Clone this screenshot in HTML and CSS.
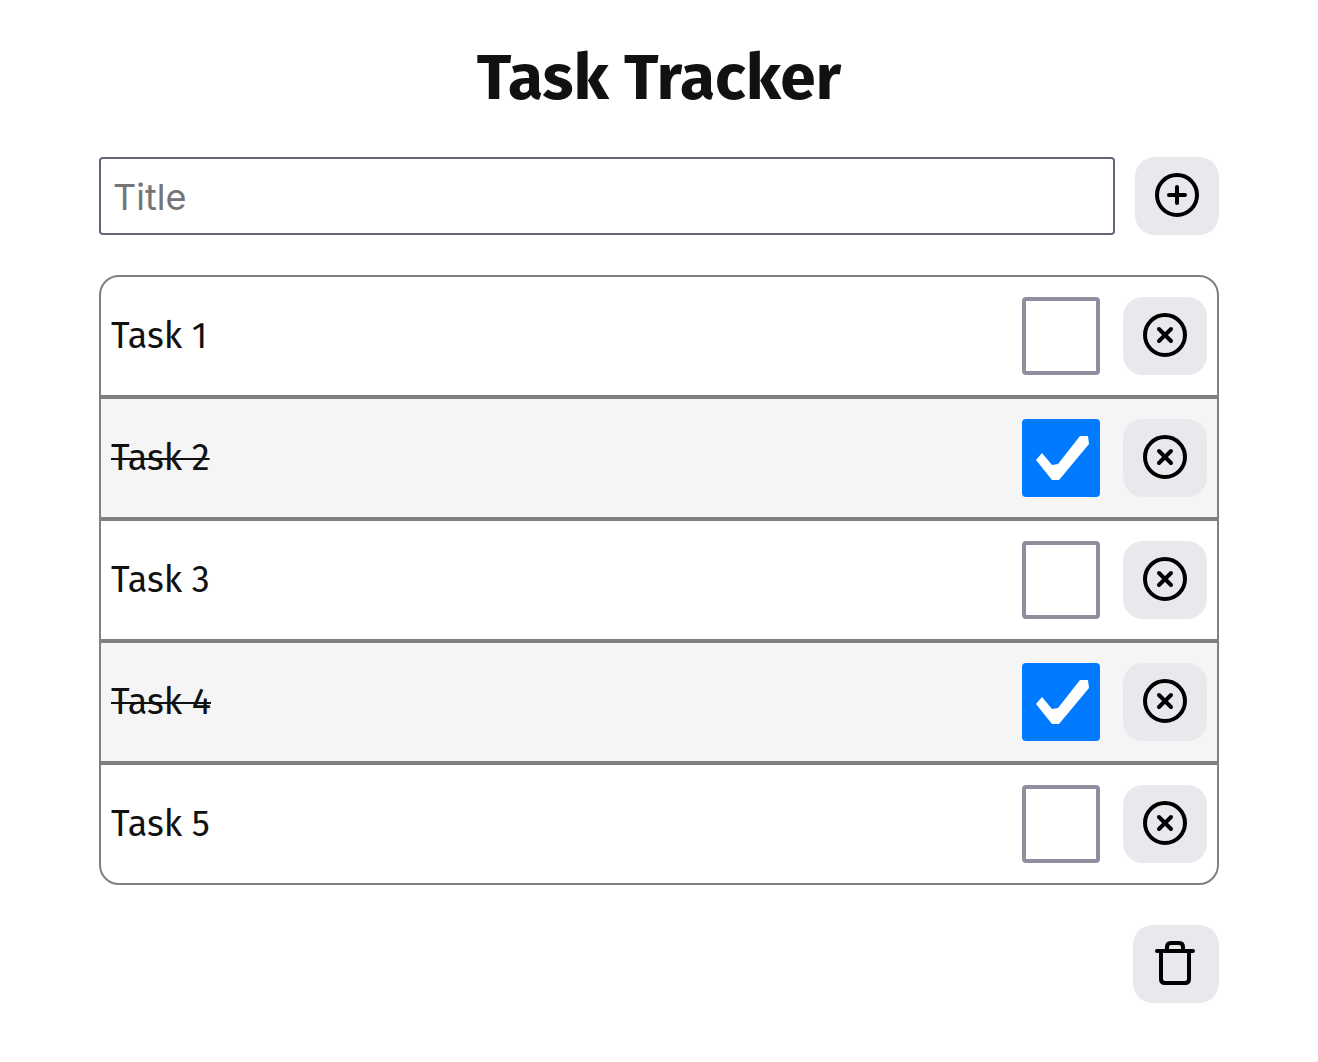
FILE: index.html
```html
<!DOCTYPE html>
<html lang="en">
<head>
  <meta charset="utf-8">
  <meta name="viewport" content="width=device-width, initial-scale=1">
  <title>Task Tracker</title>
  <link rel="stylesheet" href="styles.css">
</head>
<body>
  <svg class="sprite" aria-hidden="true">
    <symbol id="icon-add" viewBox="0 0 44 44">
      <circle cx="22" cy="22" r="20"/>
      <path d="M22 14v16M14 22h16"/>
    </symbol>
    <symbol id="icon-remove" viewBox="0 0 44 44">
      <circle cx="22" cy="22" r="20"/>
      <path d="M16 16l12 12M28 16l-12 12"/>
    </symbol>
    <symbol id="icon-trash" viewBox="0 0 44 44">
      <path d="M4 10h36M8 10v28q0 4 4 4h20q4 0 4-4V10M14 10V6q0-4 4-4h8q4 0 4 4v4"/>
    </symbol>
  </svg>

  <main class="tracker">
    <h1 class="title">Task Tracker</h1>

    <form class="add-form">
      <input class="add-input" type="text" placeholder="Title" aria-label="Title">
      <button class="button" type="button" aria-label="Add task"><svg class="icon"><use href="#icon-add"/></svg></button>
    </form>

    <ul class="tasks">
      <li class="task">
        <label class="task-name" for="task-1">Task 1</label>
        <input class="check" type="checkbox" id="task-1">
        <button class="button" type="button" aria-label="Remove Task 1"><svg class="icon"><use href="#icon-remove"/></svg></button>
      </li>
      <li class="task done">
        <label class="task-name" for="task-2">Task 2</label>
        <input class="check" type="checkbox" id="task-2" checked>
        <button class="button" type="button" aria-label="Remove Task 2"><svg class="icon"><use href="#icon-remove"/></svg></button>
      </li>
      <li class="task">
        <label class="task-name" for="task-3">Task 3</label>
        <input class="check" type="checkbox" id="task-3">
        <button class="button" type="button" aria-label="Remove Task 3"><svg class="icon"><use href="#icon-remove"/></svg></button>
      </li>
      <li class="task done">
        <label class="task-name" for="task-4">Task 4</label>
        <input class="check" type="checkbox" id="task-4" checked>
        <button class="button" type="button" aria-label="Remove Task 4"><svg class="icon"><use href="#icon-remove"/></svg></button>
      </li>
      <li class="task">
        <label class="task-name" for="task-5">Task 5</label>
        <input class="check" type="checkbox" id="task-5">
        <button class="button" type="button" aria-label="Remove Task 5"><svg class="icon"><use href="#icon-remove"/></svg></button>
      </li>
    </ul>

    <div class="actions">
      <button class="button button-clear" type="button" aria-label="Delete all tasks"><svg class="icon"><use href="#icon-trash"/></svg></button>
    </div>
  </main>
</body>
</html>
```

FILE: styles.css
```css
* {
  box-sizing: border-box;
}

body {
  margin: 0;
  background: #fff;
  color: #111;
  font-family: "Fira Sans", "Noto Sans", sans-serif;
  font-size: 36px;
}

.sprite {
  display: none;
}

.tracker {
  display: flex;
  flex-direction: column;
  gap: 40px;
  max-width: 1160px;
  margin: 0 auto;
  padding: 39px 20px 59px;
}

.title {
  margin: 0;
  font-size: 64px;
  line-height: 78px;
  font-weight: 700;
  text-align: center;
}

.add-form {
  display: flex;
  gap: 20px;
}

.add-input {
  flex: 1;
  min-width: 0;
  height: 78px;
  padding: 2px 12px 0;
  border: 2px solid #67647a;
  border-radius: 4px;
  background: #fff;
  color: inherit;
  font-family: Inter, sans-serif;
  font-size: 36px;
}

.add-input::placeholder {
  color: #757575;
}

.button {
  display: flex;
  flex: none;
  align-items: center;
  justify-content: center;
  width: 84px;
  height: 78px;
  padding: 0 0 2px;
  border: 0;
  border-radius: 20px;
  background: #e9e8ed;
  color: #000;
}

.button-clear {
  width: 86px;
  padding-right: 2px;
}

.icon {
  width: 44px;
  height: 44px;
  fill: none;
  stroke: currentColor;
  stroke-width: 4px;
  stroke-linecap: round;
  stroke-linejoin: round;
}

.tasks {
  margin: 0;
  padding: 0;
  list-style: none;
}

.task {
  display: flex;
  align-items: center;
  padding: 20px 10px;
  border: 2px solid #808080;
}

.task:first-child {
  border-radius: 20px 20px 0 0;
}

.task:last-child {
  border-radius: 0 0 20px 20px;
}

.task-name {
  margin-right: auto;
  line-height: 48px;
}

.done {
  background: #f5f5f5;
}

.done .task-name {
  text-decoration: line-through;
  text-decoration-thickness: 2px;
}

.check {
  appearance: none;
  flex: none;
  width: 78px;
  height: 78px;
  margin: 0 23px 0 0;
  border: 4px solid #8f8d9e;
  border-radius: 4px;
  background: #fff;
}

.check:checked {
  border: 0;
  background: #007bff;
}

.check:checked::before {
  content: "";
  display: block;
  width: 78px;
  height: 78px;
  background: #fff;
  clip-path: polygon(20px 34px, 30px 46px, 36px 45px, 58px 17px, 66px 17px, 67px 25px, 37px 61px, 30px 61px, 14px 41px);
}

.actions {
  display: flex;
  justify-content: flex-end;
}
```
